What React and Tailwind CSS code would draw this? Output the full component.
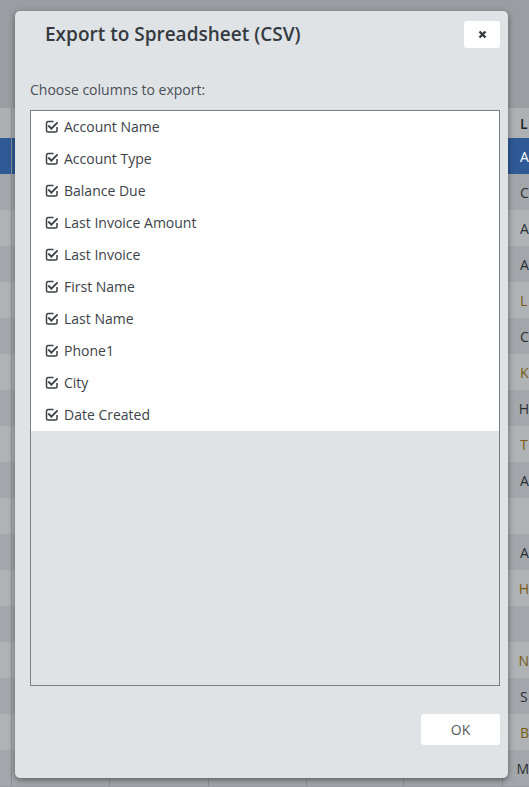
import React from 'react'

const columns = [
  'Account Name',
  'Account Type',
  'Balance Due',
  'Last Invoice Amount',
  'Last Invoice',
  'First Name',
  'Last Name',
  'Phone1',
  'City',
  'Date Created',
]

// rows of the table that sits behind the dimmed overlay
const bgRows = [
  { t: 'A', c: 'text-white', bg: 'bg-[#2e5b96]' },
  { t: 'C', c: 'text-[#2b2f33]', bg: 'bg-[#a3a7ab]' },
  { t: 'A', c: 'text-[#2b2f33]', bg: 'bg-[#b0b3b6]' },
  { t: 'A', c: 'text-[#2b2f33]', bg: 'bg-[#a3a7ab]' },
  { t: 'L', c: 'text-[#7a5d12]', bg: 'bg-[#b0b3b6]' },
  { t: 'C', c: 'text-[#2b2f33]', bg: 'bg-[#a3a7ab]' },
  { t: 'K', c: 'text-[#7a5d12]', bg: 'bg-[#b0b3b6]' },
  { t: 'H', c: 'text-[#2b2f33]', bg: 'bg-[#a3a7ab]' },
  { t: 'T', c: 'text-[#7a5d12]', bg: 'bg-[#b0b3b6]' },
  { t: 'A', c: 'text-[#2b2f33]', bg: 'bg-[#a3a7ab]' },
  { t: '', c: 'text-[#2b2f33]', bg: 'bg-[#b0b3b6]' },
  { t: 'A', c: 'text-[#2b2f33]', bg: 'bg-[#a3a7ab]' },
  { t: 'H', c: 'text-[#7a5d12]', bg: 'bg-[#b0b3b6]' },
  { t: '', c: 'text-[#2b2f33]', bg: 'bg-[#a3a7ab]' },
  { t: 'N', c: 'text-[#7a5d12]', bg: 'bg-[#b0b3b6]' },
  { t: 'S', c: 'text-[#2b2f33]', bg: 'bg-[#a3a7ab]' },
  { t: 'B', c: 'text-[#7a5d12]', bg: 'bg-[#b0b3b6]' },
  { t: 'M', c: 'text-[#2b2f33]', bg: 'bg-[#a3a7ab]' },
]

const CheckIcon = () => (
  <svg width="13" height="13" viewBox="0 0 13 13" fill="none" className="shrink-0">
    <path
      d="M8.5 1.5H3a1.5 1.5 0 0 0-1.5 1.5v7.5A1.5 1.5 0 0 0 3 12h7.5a1.5 1.5 0 0 0 1.5-1.5V7"
      stroke="#3a4046"
      strokeWidth="1.5"
    />
    <path d="M4 6.2l2.4 2.4L12 3" stroke="#3a4046" strokeWidth="1.9" strokeLinecap="square" />
  </svg>
)

const BgRow = ({ row, h }) => (
  <div className={`flex ${h} ${row.bg} text-[14px]`}>
    <div className="w-[12px] border-r border-[#8c9094]" />
    <div className="w-[99px] border-r border-[#8c9094]" />
    <div className="w-[99px] border-r border-[#8c9094]" />
    <div className="w-[99px] border-r border-[#8c9094]" />
    <div className="w-[98px] border-r border-[#8c9094]" />
    <div className="w-[100px] border-r border-[#8c9094]" />
    <div className={`flex-1 flex items-center pl-[13px] ${row.c}`}>{row.t}</div>
  </div>
)

export default function App() {
  return (
    <div
      className="relative w-full h-[787px] overflow-hidden bg-[#9a9ea2]"
      style={{ fontFamily: '"Open Sans", "Liberation Sans", sans-serif' }}
    >
      {/* table behind the overlay */}
      <div className="pt-[108px]">
        <BgRow row={{ t: 'L', c: 'text-[#1e2226] font-semibold', bg: 'bg-[#aeb1b4]' }} h="h-[30px]" />
        {bgRows.map((r, i) => (
          <BgRow key={i} row={r} h="h-[36px]" />
        ))}
      </div>

      {/* modal */}
      <div className="absolute left-[15px] top-[11px] w-[493px] h-[767px] rounded-[5px] bg-[#dfe3e6] shadow-[0_2px_6px_rgba(0,0,0,0.45)] flex flex-col">
        <div className="flex items-center justify-between pl-[30px] pr-[8px] pt-[10px]">
          <h2 className="text-[19px] font-semibold text-[#343a40] leading-[27px]">
            Export to Spreadsheet (CSV)
          </h2>
          <button className="w-[36px] h-[27px] bg-white rounded-[3px] flex items-center justify-center">
            <svg width="9" height="9" viewBox="0 0 9 9">
              <path d="M1.5 1.5l6 6M7.5 1.5l-6 6" stroke="#343a40" strokeWidth="2.4" />
            </svg>
          </button>
        </div>

        <p className="mt-[32px] pl-[15px] text-[14px] leading-[20px] text-[#4a5056]">
          Choose columns to export:
        </p>

        <div className="mt-[10px] ml-[15px] w-[470px] h-[576px] border border-[#7b7f83] bg-[#dfe3e6]">
          <ul className="bg-white">
            {columns.map((c) => (
              <li key={c} className="h-[32px] pb-[2px] flex items-center gap-[6px] pl-[14px] text-[14px] text-[#3c4248]">
                <CheckIcon />
                <span>{c}</span>
              </li>
            ))}
          </ul>
        </div>

        <div className="flex justify-end pr-[8px] mt-[28px]">
          <button className="w-[79px] h-[31px] bg-white rounded-[3px] text-[14px] text-[#555b61]">
            OK
          </button>
        </div>
      </div>
    </div>
  )
}
